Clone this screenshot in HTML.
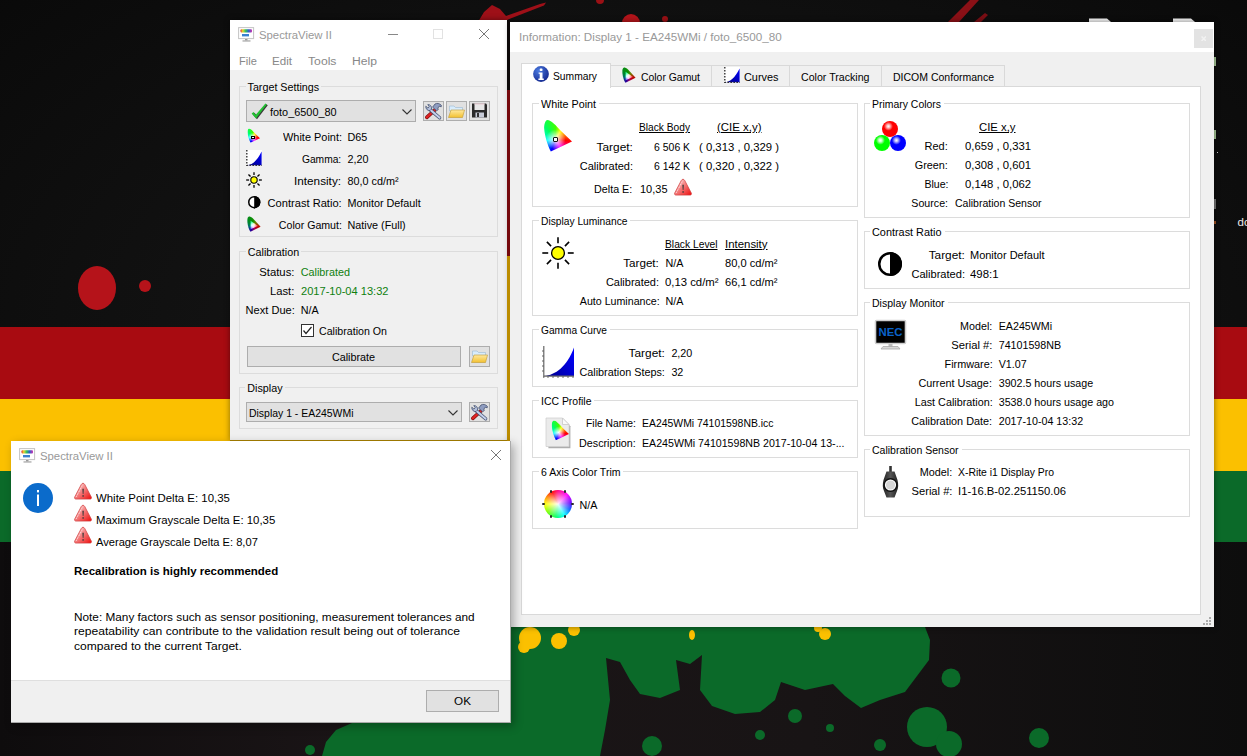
<!DOCTYPE html>
<html><head><meta charset="utf-8"><style>
html,body{margin:0;padding:0;width:1247px;height:756px;overflow:hidden;background:#0e0e0e;}
body{position:relative;font-family:"Liberation Sans",sans-serif;}
.t{position:absolute;white-space:nowrap;line-height:1;font-family:"Liberation Sans",sans-serif;}
</style></head><body>
<svg style="position:absolute;left:0;top:0" width="1247" height="756"><defs><radialGradient id="rg" cx="0.5" cy="0.45" r="0.7"><stop offset="0" stop-color="#1a1a1a"/><stop offset="1" stop-color="#090909"/></radialGradient><linearGradient id="lg" x1="0" x2="1"><stop offset="0" stop-color="#0e0c0d"/><stop offset="0.3" stop-color="#1b1517"/><stop offset="0.65" stop-color="#181415"/><stop offset="1" stop-color="#0d0d0d"/></linearGradient></defs><rect width="1247" height="756" fill="url(#rg)"/><rect x="0" y="327" width="1247" height="72" fill="#a80b11"/><rect x="0" y="399" width="1247" height="72" fill="#fbc000"/><rect x="0" y="542" width="1247" height="214" fill="url(#lg)"/><rect x="0" y="471" width="1247" height="71" fill="#0b6a29"/><ellipse cx="97" cy="288" rx="19" ry="22" fill="#b5131a"/><circle cx="145" cy="286" r="6" fill="#b5131a"/><path d="M478 22 L484 12 L492 5 L500 9 L506 16 L540 4 L546 2.5 L544 5.5 L508 19.5 L506 22Z" fill="#9e1018"/><ellipse cx="631" cy="23" rx="9" ry="9" fill="#b3141a"/><circle cx="665" cy="19" r="3" fill="#9a1015"/><circle cx="600" cy="0" r="4" fill="#9a1015"/><path d="M948 22 L970 0 L979 0 L959 22Z" fill="#8a1016"/><path d="M974 22 L985 13 L988 15 L981 22Z" fill="#7a0e14"/><path d="M322 756 L326 742 L336 730 L352 723 L511 723 L511 627 L925 627 L930 640 L929 660 L905 692 L880 700 L861 708 L845 696 L833 684 L805 690 L781 682 L775 700 L760 712 L735 714 L712 706 L700 690 L702 655 L690 664 L676 660 L680 690 L660 698 L640 694 L630 680 L620 662 L606 658 L610 700 L605 730 L600 756 Z" fill="#0b6a29"/><circle cx="310" cy="750" r="5" fill="#0b6a29"/><circle cx="951" cy="678" r="9.5" fill="#0b6a29"/><circle cx="927" cy="727" r="20" fill="#0b6a29"/><circle cx="949" cy="744" r="13" fill="#0b6a29"/><circle cx="1039" cy="738" r="10" fill="#0b6a29"/><circle cx="652" cy="746" r="10" fill="#0b6a29"/><circle cx="795" cy="716" r="7" fill="#0b6a29"/><circle cx="760" cy="735" r="5" fill="#0b6a29"/><circle cx="830" cy="728" r="4" fill="#0b6a29"/><circle cx="880" cy="745" r="6" fill="#0b6a29"/><circle cx="530" cy="638" r="11" fill="#fbc000"/><circle cx="524" cy="647" r="6" fill="#fbc000"/><circle cx="559" cy="641" r="8" fill="#fbc000"/><circle cx="574" cy="630" r="6" fill="#fbc000"/><ellipse cx="692" cy="635" rx="3" ry="5" fill="#fbc000"/><circle cx="825" cy="634" r="6" fill="#fbc000"/><circle cx="818" cy="628" r="4" fill="#fbc000"/></svg>
<svg style="position:absolute;left:1085px;top:18px;" width="120" height="5" viewBox="0 0 120 5"><path d="M4 0.5 H22 L26 4 H4Z" fill="#f2f2f2"/><path d="M88 0.5 H106 L110 4 H88Z" fill="#f2f2f2"/></svg>
<div class="t" style="left:1237.50px;top:217.27px;font-size:11.500px;color:#e8e8e8;">do</div>
<div style="position:absolute;left:1214px;top:57px;width:2px;height:9px;background:#a8c898;"></div>
<div style="position:absolute;left:1214px;top:130px;width:2px;height:9px;background:#a8c898;"></div>
<div style="position:absolute;left:1216.5px;top:151.5px;width:1.5px;height:1.5px;background:#ccc;"></div>
<div style="position:absolute;left:1214px;top:199px;width:2px;height:10px;background:#777;"></div>
<div style="position:absolute;left:1214px;top:221px;width:1.5px;height:3px;background:#a05020;"></div>
<div style="position:absolute;left:230px;top:20px;width:277px;height:420px;background:#f0f0f0;box-shadow:0 0 6px rgba(0,0,0,0.45);"></div>
<div style="position:absolute;left:230px;top:20px;width:277px;height:50px;background:#fff;"></div>
<svg style="position:absolute;left:238px;top:27px;overflow:visible" width="16" height="15" viewBox="0 0 16 15"><defs><linearGradient id="rb1"><stop offset="0" stop-color="#e83030"/><stop offset=".2" stop-color="#e8d830"/><stop offset=".45" stop-color="#30c060"/><stop offset=".7" stop-color="#3060c8"/><stop offset="1" stop-color="#d030b0"/></linearGradient></defs><rect x="0.6" y="0.6" width="15" height="11" fill="#fff" stroke="#c4c4c4" stroke-width="1"/><rect x="2.5" y="2.2" width="11.5" height="3.2" rx="1" fill="url(#rb1)"/><rect x="4" y="7" width="7" height="2.4" fill="#3a80d0"/><rect x="7" y="12" width="2.5" height="1.5" fill="#999"/><rect x="4.5" y="13.3" width="8" height="1.3" fill="#aaa"/></svg>
<div class="t" style="left:259.00px;top:29.00px;font-size:11.700px;color:#999;transform:scaleX(0.9705);transform-origin:left 0;">SpectraView II</div>
<div style="position:absolute;left:388px;top:34px;width:10px;height:1px;background:#888;"></div>
<div style="position:absolute;left:433px;top:29px;width:10px;height:10px;border:1px solid #e2e2e2;box-sizing:border-box;"></div>
<svg style="position:absolute;left:479px;top:29px;" width="10" height="10" viewBox="0 0 10 10"><path d="M0 0L10 10M10 0L0 10" stroke="#777" stroke-width="1"/></svg>
<div class="t" style="left:238.50px;top:54.61px;font-size:11.700px;color:#888;transform:scaleX(0.9442);transform-origin:left 0;">File</div>
<div class="t" style="left:272.20px;top:54.61px;font-size:11.700px;color:#888;transform:scaleX(0.9920);transform-origin:left 0;">Edit</div>
<div class="t" style="left:308.00px;top:54.61px;font-size:11.700px;color:#888;transform:scaleX(1.0434);transform-origin:left 0;">Tools</div>
<div class="t" style="left:352.20px;top:54.61px;font-size:11.700px;color:#888;transform:scaleX(1.0389);transform-origin:left 0;">Help</div>
<div style="position:absolute;left:239px;top:86px;width:259px;height:151px;border:1px solid #dcdcdc;box-sizing:border-box;"></div>
<div style="position:absolute;left:245.5px;top:82px;width:75.7066375px;height:8px;background:#f0f0f0;"></div>
<div class="t" style="left:247.50px;top:82.01px;font-size:10.750px;color:#000;">Target Settings</div>
<div style="position:absolute;left:246px;top:100px;width:170px;height:22px;background:#e1e1e1;border:1px solid #adadad;box-sizing:border-box;"></div>
<svg style="position:absolute;left:251px;top:103px;" width="17" height="17" viewBox="0 0 17 17"><path d="M0.6 10.6 L2.6 9 L4.6 11.9 L14.4 0.5 L15.8 1.5 L5 15.6 Z" fill="#3a3a3a" transform="translate(1,0.7)"/><path d="M0.6 10.6 L2.6 9 L4.6 11.9 L14.4 0.5 L15.8 1.5 L5 15.6 Z" fill="#22c032"/></svg>
<div class="t" style="left:270.00px;top:106.70px;font-size:10.900px;color:#000;">foto_6500_80</div>
<svg style="position:absolute;left:402px;top:109px;" width="10" height="6" viewBox="0 0 10 6"><path d="M0.5 0.5 L5 5 L9.5 0.5" fill="none" stroke="#333" stroke-width="1.1"/></svg>
<div style="position:absolute;left:423px;top:101px;width:21px;height:20px;background:#e1e1e1;border:1px solid #adadad;box-sizing:border-box;"></div>
<div style="position:absolute;left:446px;top:101px;width:21px;height:20px;background:#e1e1e1;border:1px solid #adadad;box-sizing:border-box;"></div>
<div style="position:absolute;left:469px;top:101px;width:21px;height:20px;background:#e1e1e1;border:1px solid #adadad;box-sizing:border-box;"></div>
<div class="t" style="right:905.50px;top:132.01px;font-size:10.750px;color:#000;transform:scaleX(1.0163);transform-origin:right 0;">White Point:</div>
<div class="t" style="left:347.50px;top:132.00px;font-size:10.800px;color:#000;">D65</div>
<div class="t" style="right:905.50px;top:154.01px;font-size:10.750px;color:#000;transform:scaleX(0.9535);transform-origin:right 0;">Gamma:</div>
<div class="t" style="left:347.50px;top:154.00px;font-size:10.800px;color:#000;">2,20</div>
<div class="t" style="right:905.50px;top:176.01px;font-size:10.750px;color:#000;transform:scaleX(1.0925);transform-origin:right 0;">Intensity:</div>
<div class="t" style="left:347.50px;top:176.00px;font-size:10.800px;color:#000;">80,0 cd/m²</div>
<div class="t" style="right:905.50px;top:198.01px;font-size:10.750px;color:#000;transform:scaleX(1.0349);transform-origin:right 0;">Contrast Ratio:</div>
<div class="t" style="left:347.50px;top:198.00px;font-size:10.800px;color:#000;">Monitor Default</div>
<div class="t" style="right:905.50px;top:220.01px;font-size:10.750px;color:#000;transform:scaleX(0.9871);transform-origin:right 0;">Color Gamut:</div>
<div class="t" style="left:347.50px;top:220.00px;font-size:10.800px;color:#000;">Native (Full)</div>
<div style="position:absolute;left:239px;top:251px;width:259px;height:123px;border:1px solid #dcdcdc;box-sizing:border-box;"></div>
<div style="position:absolute;left:245.8px;top:247px;width:55.6713125px;height:8px;background:#f0f0f0;"></div>
<div class="t" style="left:247.80px;top:246.81px;font-size:10.750px;color:#000;">Calibration</div>
<div class="t" style="right:952.50px;top:266.71px;font-size:10.750px;color:#000;transform:scaleX(1.0549);transform-origin:right 0;">Status:</div>
<div class="t" style="left:300.70px;top:266.71px;font-size:10.800px;color:#0f800f;">Calibrated</div>
<div class="t" style="right:952.50px;top:285.60px;font-size:10.750px;color:#000;transform:scaleX(1.0470);transform-origin:right 0;">Last:</div>
<div class="t" style="left:300.70px;top:285.60px;font-size:10.750px;color:#0f800f;transform:scaleX(1.0309);transform-origin:left 0;">2017-10-04 13:32</div>
<div class="t" style="right:952.50px;top:305.01px;font-size:10.750px;color:#000;transform:scaleX(1.0293);transform-origin:right 0;">Next Due:</div>
<div class="t" style="left:300.70px;top:305.01px;font-size:10.750px;color:#000;">N/A</div>
<div style="position:absolute;left:301px;top:324px;width:13px;height:13px;border:1px solid #333;box-sizing:border-box;background:#fff;"></div>
<svg style="position:absolute;left:301px;top:324px;" width="13" height="13" viewBox="0 0 13 13"><path d="M2.5 6.5 L5 9.5 L10.5 3" fill="none" stroke="#222" stroke-width="1.2"/></svg>
<div class="t" style="left:318.60px;top:325.60px;font-size:10.750px;color:#000;transform:scaleX(0.9896);transform-origin:left 0;">Calibration On</div>
<div style="position:absolute;left:247px;top:346px;width:214px;height:21px;background:#e1e1e1;border:1px solid #adadad;box-sizing:border-box;"></div>
<div class="t" style="left:331.89px;top:352.00px;font-size:10.800px;color:#000;">Calibrate</div>
<div style="position:absolute;left:469px;top:346px;width:21px;height:21px;background:#e1e1e1;border:1px solid #adadad;box-sizing:border-box;"></div>
<div style="position:absolute;left:239px;top:387px;width:259px;height:42px;border:1px solid #dcdcdc;box-sizing:border-box;"></div>
<div style="position:absolute;left:245.3px;top:383px;width:39.755578125px;height:8px;background:#f0f0f0;"></div>
<div class="t" style="left:247.30px;top:383.40px;font-size:10.750px;color:#000;">Display</div>
<div style="position:absolute;left:246px;top:402px;width:216px;height:20px;background:#e1e1e1;border:1px solid #adadad;box-sizing:border-box;"></div>
<div class="t" style="left:249.00px;top:408.31px;font-size:10.750px;color:#000;transform:scaleX(0.9718);transform-origin:left 0;">Display 1 - EA245WMi</div>
<svg style="position:absolute;left:448px;top:410px;" width="10" height="6" viewBox="0 0 10 6"><path d="M0.5 0.5 L5 5 L9.5 0.5" fill="none" stroke="#333" stroke-width="1.1"/></svg>
<div style="position:absolute;left:469px;top:402px;width:21px;height:20px;background:#e1e1e1;border:1px solid #adadad;box-sizing:border-box;"></div>
<div style="position:absolute;left:510px;top:22px;width:704px;height:605px;background:#f0f0f0;box-shadow:0 0 6px rgba(0,0,0,0.45);"></div>
<div style="position:absolute;left:510px;top:22px;width:704px;height:30px;background:#fff;"></div>
<div class="t" style="left:518.50px;top:31.00px;font-size:11.700px;color:#999;transform:scaleX(0.9985);transform-origin:left 0;">Information: Display 1 - EA245WMi / foto_6500_80</div>
<div style="position:absolute;left:1194px;top:29px;width:19px;height:19px;background:#e3e3e3;"></div>
<svg style="position:absolute;left:1200.8px;top:35.8px;" width="5.5" height="5.5" viewBox="0 0 5.5 5.5"><path d="M0.5 0.5L5 5M5 0.5L0.5 5" stroke="#f2f2f2" stroke-width="1.5"/></svg>
<div style="position:absolute;left:610px;top:65px;width:102px;height:22px;background:#f0f0f0;border:1px solid #d9d9d9;box-sizing:border-box;"></div>
<div style="position:absolute;left:711px;top:65px;width:79px;height:22px;background:#f0f0f0;border:1px solid #d9d9d9;box-sizing:border-box;"></div>
<div style="position:absolute;left:789px;top:65px;width:93px;height:22px;background:#f0f0f0;border:1px solid #d9d9d9;box-sizing:border-box;"></div>
<div style="position:absolute;left:881px;top:65px;width:124px;height:22px;background:#f0f0f0;border:1px solid #d9d9d9;box-sizing:border-box;"></div>
<div style="position:absolute;left:521px;top:86px;width:680px;height:529px;background:#fff;border:1px solid #d9d9d9;box-sizing:border-box;"></div>
<div style="position:absolute;left:521px;top:63px;width:90px;height:25px;background:#fff;border:1px solid #d9d9d9;border-bottom:none;box-sizing:border-box;"></div>
<div class="t" style="left:552.70px;top:71.01px;font-size:10.750px;color:#000;transform:scaleX(0.9567);transform-origin:left 0;">Summary</div>
<div class="t" style="left:640.70px;top:72.01px;font-size:10.750px;color:#000;transform:scaleX(0.9682);transform-origin:left 0;">Color Gamut</div>
<div class="t" style="left:743.50px;top:72.01px;font-size:10.750px;color:#000;transform:scaleX(1.0132);transform-origin:left 0;">Curves</div>
<div class="t" style="left:801.40px;top:72.01px;font-size:10.750px;color:#000;transform:scaleX(0.9884);transform-origin:left 0;">Color Tracking</div>
<div class="t" style="left:893.40px;top:72.01px;font-size:10.750px;color:#000;transform:scaleX(0.9773);transform-origin:left 0;">DICOM Conformance</div>
<div style="position:absolute;left:532px;top:103px;width:326px;height:104px;border:1px solid #dcdcdc;box-sizing:border-box;"></div>
<div style="position:absolute;left:538.8px;top:99px;width:60.0px;height:8px;background:#fff;"></div>
<div class="t" style="left:540.80px;top:98.51px;font-size:10.750px;color:#000;transform:scaleX(1.0006);transform-origin:left 0;">White Point</div>
<div class="t" style="left:638.70px;top:122.01px;font-size:10.750px;color:#000;transform:scaleX(0.9484);transform-origin:left 0;text-decoration:underline;">Black Body</div>
<div class="t" style="left:716.70px;top:122.01px;font-size:10.750px;color:#000;transform:scaleX(1.0645);transform-origin:left 0;text-decoration:underline;">(CIE x,y)</div>
<div class="t" style="right:614.50px;top:141.90px;font-size:10.750px;color:#000;transform:scaleX(1.1045);transform-origin:right 0;">Target:</div>
<div class="t" style="right:557.00px;top:141.90px;font-size:10.750px;color:#000;transform:scaleX(0.9714);transform-origin:right 0;">6 506 K</div>
<div class="t" style="left:698.70px;top:141.90px;font-size:10.750px;color:#000;transform:scaleX(1.0541);transform-origin:left 0;">( 0,313 , 0,329 )</div>
<div class="t" style="right:614.50px;top:161.01px;font-size:10.750px;color:#000;transform:scaleX(1.0233);transform-origin:right 0;">Calibrated:</div>
<div class="t" style="right:557.00px;top:161.01px;font-size:10.750px;color:#000;transform:scaleX(0.9714);transform-origin:right 0;">6 142 K</div>
<div class="t" style="left:698.70px;top:161.01px;font-size:10.750px;color:#000;transform:scaleX(1.0541);transform-origin:left 0;">( 0,320 , 0,322 )</div>
<div class="t" style="right:614.50px;top:183.60px;font-size:10.750px;color:#000;transform:scaleX(0.9990);transform-origin:right 0;">Delta E:</div>
<div class="t" style="left:639.50px;top:183.60px;font-size:10.750px;color:#000;transform:scaleX(1.0223);transform-origin:left 0;">10,35</div>
<div style="position:absolute;left:532px;top:220px;width:326px;height:96px;border:1px solid #dcdcdc;box-sizing:border-box;"></div>
<div style="position:absolute;left:538.8px;top:216px;width:91.5px;height:8px;background:#fff;"></div>
<div class="t" style="left:540.80px;top:215.60px;font-size:10.750px;color:#000;transform:scaleX(0.9524);transform-origin:left 0;">Display Luminance</div>
<div class="t" style="left:665.40px;top:238.81px;font-size:10.750px;color:#000;transform:scaleX(0.9550);transform-origin:left 0;text-decoration:underline;">Black Level</div>
<div class="t" style="left:724.90px;top:238.81px;font-size:10.750px;color:#000;transform:scaleX(1.0616);transform-origin:left 0;text-decoration:underline;">Intensity</div>
<div class="t" style="right:587.80px;top:257.90px;font-size:10.750px;color:#000;transform:scaleX(1.0863);transform-origin:right 0;">Target:</div>
<div class="t" style="left:665.40px;top:257.90px;font-size:10.750px;color:#000;">N/A</div>
<div class="t" style="left:724.90px;top:257.90px;font-size:10.750px;color:#000;transform:scaleX(1.0338);transform-origin:left 0;">80,0 cd/m²</div>
<div class="t" style="right:587.80px;top:277.01px;font-size:10.750px;color:#000;transform:scaleX(1.0214);transform-origin:right 0;">Calibrated:</div>
<div class="t" style="left:665.40px;top:277.01px;font-size:10.750px;color:#000;transform:scaleX(1.0535);transform-origin:left 0;">0,13 cd/m²</div>
<div class="t" style="left:724.90px;top:277.01px;font-size:10.750px;color:#000;transform:scaleX(1.0338);transform-origin:left 0;">66,1 cd/m²</div>
<div class="t" style="right:587.80px;top:296.01px;font-size:10.750px;color:#000;transform:scaleX(0.9904);transform-origin:right 0;">Auto Luminance:</div>
<div class="t" style="left:665.40px;top:296.01px;font-size:10.750px;color:#000;">N/A</div>
<div style="position:absolute;left:532px;top:329px;width:326px;height:58px;border:1px solid #dcdcdc;box-sizing:border-box;"></div>
<div style="position:absolute;left:538.8px;top:325px;width:71.0px;height:8px;background:#fff;"></div>
<div class="t" style="left:540.80px;top:325.10px;font-size:10.750px;color:#000;transform:scaleX(0.9443);transform-origin:left 0;">Gamma Curve</div>
<div class="t" style="right:582.40px;top:348.31px;font-size:10.750px;color:#000;transform:scaleX(1.1045);transform-origin:right 0;">Target:</div>
<div class="t" style="left:671.40px;top:348.31px;font-size:10.750px;color:#000;">2,20</div>
<div class="t" style="right:582.40px;top:367.31px;font-size:10.750px;color:#000;transform:scaleX(1.0065);transform-origin:right 0;">Calibration Steps:</div>
<div class="t" style="left:671.40px;top:367.31px;font-size:10.750px;color:#000;">32</div>
<div style="position:absolute;left:532px;top:400px;width:326px;height:58px;border:1px solid #dcdcdc;box-sizing:border-box;"></div>
<div style="position:absolute;left:538.8px;top:396px;width:55.5px;height:8px;background:#fff;"></div>
<div class="t" style="left:540.80px;top:396.01px;font-size:10.750px;color:#000;transform:scaleX(0.9717);transform-origin:left 0;">ICC Profile</div>
<div class="t" style="right:611.00px;top:418.31px;font-size:10.750px;color:#000;transform:scaleX(0.9602);transform-origin:right 0;">File Name:</div>
<div class="t" style="left:642.20px;top:418.31px;font-size:10.750px;color:#000;transform:scaleX(0.9695);transform-origin:left 0;">EA245WMi 74101598NB.icc</div>
<div class="t" style="right:611.00px;top:437.81px;font-size:10.750px;color:#000;transform:scaleX(0.9990);transform-origin:right 0;">Description:</div>
<div class="t" style="left:642.20px;top:437.81px;font-size:10.750px;color:#000;transform:scaleX(0.9879);transform-origin:left 0;">EA245WMi 74101598NB 2017-10-04 13-...</div>
<div style="position:absolute;left:532px;top:471px;width:326px;height:58px;border:1px solid #dcdcdc;box-sizing:border-box;"></div>
<div style="position:absolute;left:538.8px;top:467px;width:84.5px;height:8px;background:#fff;"></div>
<div class="t" style="left:540.80px;top:467.31px;font-size:10.750px;color:#000;transform:scaleX(0.9786);transform-origin:left 0;">6 Axis Color Trim</div>
<div class="t" style="left:579.50px;top:500.01px;font-size:10.750px;color:#000;">N/A</div>
<div style="position:absolute;left:864px;top:103px;width:326px;height:115px;border:1px solid #dcdcdc;box-sizing:border-box;"></div>
<div style="position:absolute;left:870.3px;top:99px;width:74.0px;height:8px;background:#fff;"></div>
<div class="t" style="left:872.30px;top:98.60px;font-size:10.750px;color:#000;transform:scaleX(0.9708);transform-origin:left 0;">Primary Colors</div>
<div class="t" style="left:979.30px;top:121.90px;font-size:10.750px;color:#000;transform:scaleX(1.0536);transform-origin:left 0;text-decoration:underline;">CIE x,y</div>
<div class="t" style="right:298.80px;top:140.71px;font-size:10.750px;color:#000;transform:scaleX(1.0217);transform-origin:right 0;">Red:</div>
<div class="t" style="left:964.50px;top:140.71px;font-size:10.750px;color:#000;transform:scaleX(1.0516);transform-origin:left 0;">0,659 , 0,331</div>
<div class="t" style="right:298.80px;top:159.51px;font-size:10.750px;color:#000;transform:scaleX(1.0072);transform-origin:right 0;">Green:</div>
<div class="t" style="left:964.50px;top:159.51px;font-size:10.750px;color:#000;transform:scaleX(1.0516);transform-origin:left 0;">0,308 , 0,601</div>
<div class="t" style="right:298.80px;top:178.60px;font-size:10.750px;color:#000;transform:scaleX(0.9836);transform-origin:right 0;">Blue:</div>
<div class="t" style="left:964.50px;top:178.60px;font-size:10.750px;color:#000;transform:scaleX(1.0516);transform-origin:left 0;">0,148 , 0,062</div>
<div class="t" style="right:298.80px;top:197.71px;font-size:10.750px;color:#000;transform:scaleX(0.9906);transform-origin:right 0;">Source:</div>
<div class="t" style="left:954.60px;top:197.71px;font-size:10.750px;color:#000;transform:scaleX(0.9781);transform-origin:left 0;">Calibration Sensor</div>
<div style="position:absolute;left:864px;top:231px;width:326px;height:58px;border:1px solid #dcdcdc;box-sizing:border-box;"></div>
<div style="position:absolute;left:870.3px;top:227px;width:74.5px;height:8px;background:#fff;"></div>
<div class="t" style="left:872.30px;top:227.01px;font-size:10.750px;color:#000;transform:scaleX(1.0115);transform-origin:left 0;">Contrast Ratio</div>
<div class="t" style="right:282.50px;top:250.01px;font-size:10.750px;color:#000;transform:scaleX(1.1015);transform-origin:right 0;">Target:</div>
<div class="t" style="left:970.10px;top:250.01px;font-size:10.750px;color:#000;transform:scaleX(1.0220);transform-origin:left 0;">Monitor Default</div>
<div class="t" style="right:282.50px;top:269.21px;font-size:10.750px;color:#000;transform:scaleX(1.0310);transform-origin:right 0;">Calibrated:</div>
<div class="t" style="left:970.10px;top:269.21px;font-size:10.750px;color:#000;transform:scaleX(1.0594);transform-origin:left 0;">498:1</div>
<div style="position:absolute;left:864px;top:302px;width:326px;height:134px;border:1px solid #dcdcdc;box-sizing:border-box;"></div>
<div style="position:absolute;left:870.3px;top:298px;width:77.5px;height:8px;background:#fff;"></div>
<div class="t" style="left:872.30px;top:298.01px;font-size:10.750px;color:#000;transform:scaleX(0.9787);transform-origin:left 0;">Display Monitor</div>
<div class="t" style="right:254.70px;top:321.01px;font-size:10.750px;color:#000;transform:scaleX(0.9980);transform-origin:right 0;">Model:</div>
<div class="t" style="left:998.70px;top:321.00px;font-size:10.700px;color:#000;">EA245WMi</div>
<div class="t" style="right:254.70px;top:340.10px;font-size:10.750px;color:#000;transform:scaleX(1.0447);transform-origin:right 0;">Serial #:</div>
<div class="t" style="left:998.70px;top:340.11px;font-size:10.700px;color:#000;">74101598NB</div>
<div class="t" style="right:254.70px;top:359.21px;font-size:10.750px;color:#000;transform:scaleX(1.0089);transform-origin:right 0;">Firmware:</div>
<div class="t" style="left:998.70px;top:359.22px;font-size:10.700px;color:#000;">V1.07</div>
<div class="t" style="right:254.70px;top:378.01px;font-size:10.750px;color:#000;transform:scaleX(1.0083);transform-origin:right 0;">Current Usage:</div>
<div class="t" style="left:998.70px;top:378.00px;font-size:10.700px;color:#000;">3902.5 hours usage</div>
<div class="t" style="right:254.70px;top:397.10px;font-size:10.750px;color:#000;transform:scaleX(1.0041);transform-origin:right 0;">Last Calibration:</div>
<div class="t" style="left:998.70px;top:397.11px;font-size:10.700px;color:#000;">3538.0 hours usage ago</div>
<div class="t" style="right:254.70px;top:415.90px;font-size:10.750px;color:#000;transform:scaleX(1.0091);transform-origin:right 0;">Calibration Date:</div>
<div class="t" style="left:998.70px;top:415.91px;font-size:10.700px;color:#000;">2017-10-04 13:32</div>
<div style="position:absolute;left:864px;top:449px;width:326px;height:68px;border:1px solid #dcdcdc;box-sizing:border-box;"></div>
<div style="position:absolute;left:870.3px;top:445px;width:91.5px;height:8px;background:#fff;"></div>
<div class="t" style="left:872.30px;top:444.90px;font-size:10.750px;color:#000;transform:scaleX(0.9781);transform-origin:left 0;">Calibration Sensor</div>
<div class="t" style="right:294.60px;top:467.31px;font-size:10.750px;color:#000;transform:scaleX(1.0073);transform-origin:right 0;">Model:</div>
<div class="t" style="left:958.30px;top:467.31px;font-size:10.750px;color:#000;transform:scaleX(0.9680);transform-origin:left 0;">X-Rite i1 Display Pro</div>
<div class="t" style="right:294.60px;top:486.10px;font-size:10.750px;color:#000;transform:scaleX(1.0371);transform-origin:right 0;">Serial #:</div>
<div class="t" style="left:958.30px;top:486.10px;font-size:10.750px;color:#000;transform:scaleX(1.0465);transform-origin:left 0;">I1-16.B-02.251150.06</div>
<svg style="position:absolute;left:1202px;top:616px;" width="10" height="10" viewBox="0 0 10 10"><rect x="7" y="1" width="2" height="2" fill="#aaa"/><rect x="4" y="4" width="2" height="2" fill="#aaa"/><rect x="7" y="4" width="2" height="2" fill="#aaa"/><rect x="1" y="7" width="2" height="2" fill="#aaa"/><rect x="4" y="7" width="2" height="2" fill="#aaa"/><rect x="7" y="7" width="2" height="2" fill="#aaa"/></svg>
<div style="position:absolute;left:507px;top:20px;width:3px;height:70px;background:#0c0808;"></div>
<div style="position:absolute;left:507px;top:90px;width:3px;height:166px;background:#74080c;"></div>
<div style="position:absolute;left:507px;top:256px;width:3px;height:185px;background:#bb8c00;"></div>
<div style="position:absolute;left:230px;top:440px;width:277px;height:1px;background:#a88000;"></div>
<svg style="position:absolute;left:424.5px;top:102px;overflow:visible" width="18" height="18" viewBox="0 0 18 18"><path d="M1.8 15.4 L9.6 8.2" stroke="#7a0c0c" stroke-width="3.6" stroke-linecap="round"/><path d="M1.8 15.4 L9.6 8.2" stroke="#e02424" stroke-width="2.3" stroke-linecap="round"/><path d="M7.6 5.2 L10 2 C12 0.9 14.4 1.2 16.4 3.4 L16.2 4.8 L14.2 4.2 L12.8 6.2 L13.4 7.4 L11.6 8.8 Z" fill="#8e9cc0" stroke="#44506e" stroke-width="0.8"/><path d="M5 7.6 L14.6 15.8" stroke="#44506e" stroke-width="3.4" stroke-linecap="round"/><path d="M5 7.6 L14.6 15.8" stroke="#c4d0ec" stroke-width="2" stroke-linecap="round"/><path d="M0.8 4.2 C0.5 6.8 2.5 8.8 5 8.6 L6.6 7 C7 4.5 5.2 2.4 2.8 2.6 L4.2 4.6 L3 6.2 Z" fill="#b4c0dc" stroke="#44506e" stroke-width="0.8"/></svg>
<svg style="position:absolute;left:448px;top:103px;overflow:visible" width="17" height="16" viewBox="0 0 17 16"><defs><linearGradient id="fg2" x1="0" y1="0" x2="0" y2="1"><stop offset="0" stop-color="#ffe9a0"/><stop offset="1" stop-color="#f2c030"/></linearGradient></defs><path d="M1.5 3 H6 L7.5 4.5 H14.5 V8 H1.5 Z" fill="#d8ecfc" stroke="#9ab8d0" stroke-width="0.6"/><path d="M3 7 H16.5 L14.5 14.5 H0.5 Z" fill="url(#fg2)" stroke="#c09830" stroke-width="0.6"/></svg>
<svg style="position:absolute;left:471px;top:102px;overflow:visible" width="17" height="17" viewBox="0 0 17 17"><path d="M1 1.5 H15 L16 2.5 V15.5 H1 Z" fill="#2a2a2a"/><rect x="3.5" y="1.5" width="10" height="6.5" fill="#e8e8e8"/><rect x="3.5" y="1.5" width="10" height="1" fill="#e8c8d0"/><rect x="4.5" y="10.5" width="8.5" height="5" fill="#c8ccd8"/><rect x="6" y="11" width="2" height="4" fill="#333"/></svg>
<svg style="position:absolute;left:471px;top:348px;overflow:visible" width="17" height="16" viewBox="0 0 17 16"><defs><linearGradient id="fg3" x1="0" y1="0" x2="0" y2="1"><stop offset="0" stop-color="#ffe9a0"/><stop offset="1" stop-color="#f2c030"/></linearGradient></defs><path d="M1.5 3 H6 L7.5 4.5 H14.5 V8 H1.5 Z" fill="#d8ecfc" stroke="#9ab8d0" stroke-width="0.6"/><path d="M3 7 H16.5 L14.5 14.5 H0.5 Z" fill="url(#fg3)" stroke="#c09830" stroke-width="0.6"/></svg>
<svg style="position:absolute;left:470.5px;top:403px;overflow:visible" width="18" height="18" viewBox="0 0 18 18"><path d="M1.8 15.4 L9.6 8.2" stroke="#7a0c0c" stroke-width="3.6" stroke-linecap="round"/><path d="M1.8 15.4 L9.6 8.2" stroke="#e02424" stroke-width="2.3" stroke-linecap="round"/><path d="M7.6 5.2 L10 2 C12 0.9 14.4 1.2 16.4 3.4 L16.2 4.8 L14.2 4.2 L12.8 6.2 L13.4 7.4 L11.6 8.8 Z" fill="#8e9cc0" stroke="#44506e" stroke-width="0.8"/><path d="M5 7.6 L14.6 15.8" stroke="#44506e" stroke-width="3.4" stroke-linecap="round"/><path d="M5 7.6 L14.6 15.8" stroke="#c4d0ec" stroke-width="2" stroke-linecap="round"/><path d="M0.8 4.2 C0.5 6.8 2.5 8.8 5 8.6 L6.6 7 C7 4.5 5.2 2.4 2.8 2.6 L4.2 4.6 L3 6.2 Z" fill="#b4c0dc" stroke="#44506e" stroke-width="0.8"/></svg>
<div style="position:absolute;left:247px;top:128px;width:30px;height:34px;transform:scale(0.45);transform-origin:0 0;"><div style="width:30px;height:34px;clip-path:path('M4.4 1 C2 1.5 1 6 1.2 10 C1.8 17 4.5 26 7.8 32.5 L29 22.5 L18 12 C13 6.5 8 1 4.4 1 Z');background:radial-gradient(circle at 12.6px 20.3px, rgba(255,255,255,1) 0px, rgba(255,255,255,0.6) 4px, rgba(255,255,255,0) 10px), conic-gradient(from 0deg at 12.6px 20.3px, #40ff00 0deg, #ffff00 30deg, #ff0000 97deg, #ff00ff 150deg, #0000ff 200deg, #00ffff 262deg, #00ff60 320deg, #40ff00 360deg);"></div></div>
<div style="position:absolute;left:251.2px;top:135.6px;width:3.4000000000000057px;height:3.5999999999999943px;border:1.1px solid #000;box-sizing:border-box;background:#fff;"></div>
<svg style="position:absolute;left:246px;top:150px;overflow:visible" width="16" height="16" viewBox="0 0 16 16"><defs><linearGradient id="gg4" x1="0" y1="1" x2="1" y2="0"><stop offset="0" stop-color="#000080"/><stop offset="1" stop-color="#0000ff"/></linearGradient></defs><rect x="0.5" y="0" width="15.5" height="15.5" fill="#fff"/><path d="M1 15.3 C6 15 11 11 15.6 1.5 L15.6 15.3 Z" fill="url(#gg4)"/><path d="M0.8 0 V15.4 H16" fill="none" stroke="#333" stroke-width="1.4" stroke-dasharray="1.6 1.4"/></svg>
<svg style="position:absolute;left:246px;top:171.5px;overflow:visible" width="16.0" height="16.0" viewBox="0 0 32 32"><path d="M16.00 6.20 L16.00 0.30" stroke="#000" stroke-width="2.6"/><path d="M22.93 9.07 L27.10 4.90" stroke="#000" stroke-width="2.6"/><path d="M25.80 16.00 L31.70 16.00" stroke="#000" stroke-width="2.6"/><path d="M22.93 22.93 L27.10 27.10" stroke="#000" stroke-width="2.6"/><path d="M16.00 25.80 L16.00 31.70" stroke="#000" stroke-width="2.6"/><path d="M9.07 22.93 L4.90 27.10" stroke="#000" stroke-width="2.6"/><path d="M6.20 16.00 L0.30 16.00" stroke="#000" stroke-width="2.6"/><path d="M9.07 9.07 L4.90 4.90" stroke="#000" stroke-width="2.6"/><circle cx="16" cy="16" r="6.4" fill="#ffff00" stroke="#000" stroke-width="2.2"/></svg>
<svg style="position:absolute;left:247.5px;top:196px;overflow:visible" width="12.4" height="12.4" viewBox="0 0 12.4 12.4"><circle cx="6.2" cy="6.2" r="5.45" fill="#fff" stroke="#000" stroke-width="1.5"/><path d="M6.2 0 A6.2 6.2 0 0 1 6.2 12.4 Z" fill="#000"/></svg>
<div style="position:absolute;left:247px;top:216px;width:14px;height:16px;transform:scale(1.0);transform-origin:0 0;"><div style="position:absolute;left:0;top:0;width:14px;height:16px;clip-path:path('M2 0.5 C0.5 1 0.2 3 0.4 6 C0.8 10 1.5 13 3.5 15.8 L13.6 10.8 L6 2.5 C4.5 1 3 0.5 2 0.5 Z');background:conic-gradient(from 0deg at 6px 10px, #109000 0deg, #708000 40deg, #c00000 100deg, #a00060 160deg, #2000a0 205deg, #007070 265deg, #008a20 320deg, #109000 360deg);"></div><div style="position:absolute;left:0;top:0;width:14px;height:16px;clip-path:polygon(3.6px 4.8px, 3.6px 13.2px, 11px 10px);background:radial-gradient(circle at 6px 9.5px, #fff 0px, rgba(255,255,255,0.8) 1.5px, rgba(255,255,255,0) 4px), conic-gradient(from 0deg at 6px 9.5px, #40ff80 0deg, #ffd060 40deg, #ff4060 100deg, #ff60ff 170deg, #6060ff 215deg, #00ffff 265deg, #40ff80 360deg);"></div></div>
<svg style="position:absolute;left:533px;top:66px;overflow:visible" width="16" height="16" viewBox="0 0 16 16"><defs><radialGradient id="ig5" cx="0.35" cy="0.3" r="0.8"><stop offset="0" stop-color="#4a7ae0"/><stop offset="1" stop-color="#10238a"/></radialGradient></defs><circle cx="8" cy="8" r="7.9" fill="url(#ig5)"/><rect x="6.7" y="2.6" width="2.8" height="2.4" rx="0.8" fill="#fff"/><path d="M5.6 6.4 H9.5 V12.6 H10.8 V14 H5.4 V12.6 H6.7 V7.7 H5.6 Z" fill="#fff"/></svg>
<div style="position:absolute;left:622px;top:67px;width:14px;height:16px;transform:scale(1.0);transform-origin:0 0;"><div style="position:absolute;left:0;top:0;width:14px;height:16px;clip-path:path('M2 0.5 C0.5 1 0.2 3 0.4 6 C0.8 10 1.5 13 3.5 15.8 L13.6 10.8 L6 2.5 C4.5 1 3 0.5 2 0.5 Z');background:conic-gradient(from 0deg at 6px 10px, #109000 0deg, #708000 40deg, #c00000 100deg, #a00060 160deg, #2000a0 205deg, #007070 265deg, #008a20 320deg, #109000 360deg);"></div><div style="position:absolute;left:0;top:0;width:14px;height:16px;clip-path:polygon(3.6px 4.8px, 3.6px 13.2px, 11px 10px);background:radial-gradient(circle at 6px 9.5px, #fff 0px, rgba(255,255,255,0.8) 1.5px, rgba(255,255,255,0) 4px), conic-gradient(from 0deg at 6px 9.5px, #40ff80 0deg, #ffd060 40deg, #ff4060 100deg, #ff60ff 170deg, #6060ff 215deg, #00ffff 265deg, #40ff80 360deg);"></div></div>
<svg style="position:absolute;left:724px;top:67px;overflow:visible" width="16" height="16" viewBox="0 0 16 16"><defs><linearGradient id="gg6" x1="0" y1="1" x2="1" y2="0"><stop offset="0" stop-color="#000080"/><stop offset="1" stop-color="#0000ff"/></linearGradient></defs><rect x="0.5" y="0" width="15.5" height="15.5" fill="#fff"/><path d="M1 15.3 C6 15 11 11 15.6 1.5 L15.6 15.3 Z" fill="url(#gg6)"/><path d="M0.8 0 V15.4 H16" fill="none" stroke="#333" stroke-width="1.4" stroke-dasharray="1.6 1.4"/></svg>
<div style="position:absolute;left:543px;top:119px;width:30px;height:34px;transform:scale(1.0);transform-origin:0 0;"><div style="width:30px;height:34px;clip-path:path('M4.4 1 C2 1.5 1 6 1.2 10 C1.8 17 4.5 26 7.8 32.5 L29 22.5 L18 12 C13 6.5 8 1 4.4 1 Z');background:radial-gradient(circle at 12.6px 20.3px, rgba(255,255,255,1) 0px, rgba(255,255,255,0.6) 4px, rgba(255,255,255,0) 10px), conic-gradient(from 0deg at 12.6px 20.3px, #40ff00 0deg, #ffff00 30deg, #ff0000 97deg, #ff00ff 150deg, #0000ff 200deg, #00ffff 262deg, #00ff60 320deg, #40ff00 360deg);"></div><div style="position:absolute;left:10.2px;top:17.6px;width:5.2px;height:5.2px;box-sizing:border-box;border:1.5px solid #111;border-radius:1px;background:#fff;"></div></div>
<svg style="position:absolute;left:673.5px;top:178px;overflow:visible" width="18.0" height="18.0" viewBox="0 0 18 18"><defs><linearGradient id="wg7" x1="0" y1="0" x2="1" y2="1"><stop offset="0" stop-color="#ffe4e4"/><stop offset="0.5" stop-color="#f47878"/><stop offset="1" stop-color="#ee0a0a"/></linearGradient></defs><path d="M9 1.2 C9.8 1.2 10.3 1.8 10.8 2.6 L17.3 15 C17.8 16.1 17.3 17.1 16 17.1 H2 C0.7 17.1 0.2 16.1 0.7 15 L7.2 2.6 C7.7 1.8 8.2 1.2 9 1.2Z" fill="url(#wg7)" stroke="#d04040" stroke-width="0.7"/><path d="M2.2 14.8 L8.4 3.4" stroke="#fff" stroke-width="0.9" stroke-dasharray="1 0.8" opacity="0.9"/><path d="M8.35 6.8 H9.85 L9.45 12 H8.75 Z" fill="#3a3a3a"/><rect x="8.4" y="13.2" width="1.4" height="1.5" fill="#3a3a3a"/></svg>
<svg style="position:absolute;left:542px;top:236.5px;overflow:visible" width="32.0" height="32.0" viewBox="0 0 32 32"><path d="M16.00 6.20 L16.00 0.30" stroke="#000" stroke-width="1.6"/><path d="M22.93 9.07 L27.10 4.90" stroke="#000" stroke-width="1.6"/><path d="M25.80 16.00 L31.70 16.00" stroke="#000" stroke-width="1.6"/><path d="M22.93 22.93 L27.10 27.10" stroke="#000" stroke-width="1.6"/><path d="M16.00 25.80 L16.00 31.70" stroke="#000" stroke-width="1.6"/><path d="M9.07 22.93 L4.90 27.10" stroke="#000" stroke-width="1.6"/><path d="M6.20 16.00 L0.30 16.00" stroke="#000" stroke-width="1.6"/><path d="M9.07 9.07 L4.90 4.90" stroke="#000" stroke-width="1.6"/><circle cx="16" cy="16" r="6.4" fill="#ffff00" stroke="#000" stroke-width="1.3"/></svg>
<svg style="position:absolute;left:542.5px;top:345px;overflow:visible" width="32" height="33" viewBox="0 0 32 33"><defs><linearGradient id="gg8" x1="0" y1="1" x2="1" y2="0.3"><stop offset="0" stop-color="#00008a"/><stop offset="1" stop-color="#0000f5"/></linearGradient></defs><path d="M1.5 31 C12 30 24 22 31 2.5 L31 31 Z" fill="url(#gg8)"/><path d="M0.8 1 V31.2 H31" fill="none" stroke="#666" stroke-width="1.2"/><path d="M-1 6 h2" stroke="#666" stroke-width="1"/><path d="M-1 11 h2" stroke="#666" stroke-width="1"/><path d="M-1 16 h2" stroke="#666" stroke-width="1"/><path d="M-1 21 h2" stroke="#666" stroke-width="1"/><path d="M-1 26 h2" stroke="#666" stroke-width="1"/><path d="M0.8 31 v2" stroke="#666" stroke-width="1"/><path d="M5 31 v2" stroke="#666" stroke-width="1"/><path d="M10 31 v2" stroke="#666" stroke-width="1"/><path d="M15 31 v2" stroke="#666" stroke-width="1"/><path d="M20 31 v2" stroke="#666" stroke-width="1"/><path d="M25 31 v2" stroke="#666" stroke-width="1"/><path d="M30 31 v2" stroke="#666" stroke-width="1"/></svg>
<svg style="position:absolute;left:545px;top:417px;overflow:visible" width="27" height="33" viewBox="0 0 27 33"><path d="M2 2 H18 L24 8 V30 H2 Z" fill="#777" opacity="0.6" transform="translate(1.4,1.2)"/><path d="M1 1 H17.5 L24 7.5 V29.5 H1 Z" fill="#ebebeb" stroke="#d0d0d0" stroke-width="0.8"/><path d="M17.5 1 V7.5 H24 Z" fill="#fafafa" stroke="#c8c8c8" stroke-width="0.8"/></svg><div style="position:absolute;left:550.6px;top:420.4px;width:30px;height:34px;transform:scale(0.62);transform-origin:0 0;"><div style="width:30px;height:34px;clip-path:path('M4.4 1 C2 1.5 1 6 1.2 10 C1.8 17 4.5 26 7.8 32.5 L29 22.5 L18 12 C13 6.5 8 1 4.4 1 Z');background:radial-gradient(circle at 12.6px 20.3px, rgba(255,255,255,1) 0px, rgba(255,255,255,0.6) 4px, rgba(255,255,255,0) 10px), conic-gradient(from 0deg at 12.6px 20.3px, #40ff00 0deg, #ffff00 30deg, #ff0000 97deg, #ff00ff 150deg, #0000ff 200deg, #00ffff 262deg, #00ff60 320deg, #40ff00 360deg);"></div></div>
<div style="position:absolute;left:543px;top:489px;width:30px;height:30px;"><div style="position:absolute;left:1px;top:1px;width:28px;height:28px;border-radius:50%;background:radial-gradient(circle, rgba(255,255,255,0.95) 0, rgba(255,255,255,0.6) 5px, rgba(255,255,255,0) 14px), conic-gradient(#ff0080 0deg, #ff00ff 45deg, #6000ff 85deg, #0060ff 115deg, #00ffff 150deg, #00ff60 190deg, #80ff00 235deg, #ffff00 270deg, #ff8000 305deg, #ff0000 335deg, #ff0080 360deg);"></div><div style="position:absolute;left:21.15px;top:1.34px;width:2.2px;height:2.2px;border-radius:50%;background:#2a2a2a;"></div><div style="position:absolute;left:28.40px;top:13.90px;width:2.2px;height:2.2px;border-radius:50%;background:#2a2a2a;"></div><div style="position:absolute;left:21.15px;top:26.46px;width:2.2px;height:2.2px;border-radius:50%;background:#2a2a2a;"></div><div style="position:absolute;left:6.65px;top:26.46px;width:2.2px;height:2.2px;border-radius:50%;background:#2a2a2a;"></div><div style="position:absolute;left:-0.60px;top:13.90px;width:2.2px;height:2.2px;border-radius:50%;background:#2a2a2a;"></div><div style="position:absolute;left:6.65px;top:1.34px;width:2.2px;height:2.2px;border-radius:50%;background:#2a2a2a;"></div></div>
<div style="position:absolute;left:874px;top:121px;width:32px;height:32px;"><div style="position:absolute;left:8px;top:0px;width:16px;height:16px;border-radius:50%;background:radial-gradient(circle at 40% 33%, #fff 0, #ffc0c0 1.5px, #ff0000 4.5px, #ff0000 100%);"></div><div style="position:absolute;left:0px;top:14px;width:16px;height:16px;border-radius:50%;background:radial-gradient(circle at 40% 33%, #fff 0, #d0ffd0 1.5px, #00ff00 4.5px, #00ff00 100%);"></div><div style="position:absolute;left:16px;top:14px;width:16px;height:16px;border-radius:50%;background:radial-gradient(circle at 40% 33%, #fff 0, #c0c0ff 1.5px, #0000ff 4.5px, #0000ff 100%);"></div></div>
<svg style="position:absolute;left:878px;top:252px;overflow:visible" width="24" height="24" viewBox="0 0 24 24"><circle cx="12" cy="12" r="10.75" fill="#fff" stroke="#000" stroke-width="2.5"/><path d="M12 0 A12 12 0 0 1 12 24 Z" fill="#000"/></svg>
<svg style="position:absolute;left:874.5px;top:320px;overflow:visible" width="31" height="30" viewBox="0 0 31 30"><rect x="0.5" y="0.5" width="30" height="23" rx="1" fill="#000" stroke="#cfcfcf" stroke-width="1.6"/><text x="15.5" y="16" text-anchor="middle" font-family="Liberation Sans" font-weight="bold" font-size="10" fill="#0a62c8" textLength="24" lengthAdjust="spacingAndGlyphs">NEC</text><rect x="13.5" y="24" width="4" height="3" fill="#bbb"/><path d="M6 29 L8 26.5 H23 L25 29 Z" fill="#d8d8d8" stroke="#aaa" stroke-width="0.8"/></svg>
<svg style="position:absolute;left:882px;top:466px;overflow:visible" width="17" height="32" viewBox="0 0 17 32"><defs><linearGradient id="sg9" x1="0" x2="1"><stop offset="0" stop-color="#222"/><stop offset="0.5" stop-color="#555"/><stop offset="1" stop-color="#222"/></linearGradient></defs><rect x="7.2" y="0" width="2.6" height="6" fill="#333"/><path d="M4.5 5.5 H12.5 L15.5 14 C16.5 18 16.5 22 15 25 L12.5 31.5 H4.5 L2 25 C0.5 22 0.5 18 1.5 14 Z" fill="url(#sg9)"/><circle cx="8.5" cy="19" r="7" fill="#111"/><circle cx="8.5" cy="19" r="5.6" fill="#fff"/><circle cx="8.5" cy="19" r="4.6" fill="#d6d6d6"/></svg>
<div style="position:absolute;left:11px;top:441px;width:500px;height:282px;background:#f0f0f0;box-shadow:3px 3px 9px rgba(0,0,0,0.3);border:1px solid #aaa;border-top:none;border-left:none;box-sizing:border-box;"></div>
<div style="position:absolute;left:11px;top:441px;width:499px;height:239px;background:#fff;"></div>
<div style="position:absolute;left:11px;top:680px;width:499px;height:1px;background:#dfdfdf;"></div>
<svg style="position:absolute;left:19px;top:448px;overflow:visible" width="16" height="15" viewBox="0 0 16 15"><defs><linearGradient id="rb10"><stop offset="0" stop-color="#e83030"/><stop offset=".2" stop-color="#e8d830"/><stop offset=".45" stop-color="#30c060"/><stop offset=".7" stop-color="#3060c8"/><stop offset="1" stop-color="#d030b0"/></linearGradient></defs><rect x="0.6" y="0.6" width="15" height="11" fill="#fff" stroke="#c4c4c4" stroke-width="1"/><rect x="2.5" y="2.2" width="11.5" height="3.2" rx="1" fill="url(#rb10)"/><rect x="4" y="7" width="7" height="2.4" fill="#3a80d0"/><rect x="7" y="12" width="2.5" height="1.5" fill="#999"/><rect x="4.5" y="13.3" width="8" height="1.3" fill="#aaa"/></svg>
<div class="t" style="left:40.00px;top:450.00px;font-size:11.700px;color:#999;transform:scaleX(0.9705);transform-origin:left 0;">SpectraView II</div>
<svg style="position:absolute;left:491px;top:450px;" width="10" height="10" viewBox="0 0 10 10"><path d="M0 0L10 10M10 0L0 10" stroke="#666" stroke-width="0.9"/></svg>
<svg style="position:absolute;left:23px;top:483px;overflow:visible" width="30" height="30" viewBox="0 0 30 30"><circle cx="15" cy="15" r="15" fill="#0b6bcb"/><rect x="14" y="7" width="2" height="2.4" fill="#fff"/><rect x="14" y="11.5" width="2" height="11.5" fill="#fff"/></svg>
<svg style="position:absolute;left:74px;top:482px;overflow:visible" width="18.0" height="18.0" viewBox="0 0 18 18"><defs><linearGradient id="wg11" x1="0" y1="0" x2="1" y2="1"><stop offset="0" stop-color="#ffe4e4"/><stop offset="0.5" stop-color="#f47878"/><stop offset="1" stop-color="#ee0a0a"/></linearGradient></defs><path d="M9 1.2 C9.8 1.2 10.3 1.8 10.8 2.6 L17.3 15 C17.8 16.1 17.3 17.1 16 17.1 H2 C0.7 17.1 0.2 16.1 0.7 15 L7.2 2.6 C7.7 1.8 8.2 1.2 9 1.2Z" fill="url(#wg11)" stroke="#d04040" stroke-width="0.7"/><path d="M2.2 14.8 L8.4 3.4" stroke="#fff" stroke-width="0.9" stroke-dasharray="1 0.8" opacity="0.9"/><path d="M8.35 6.8 H9.85 L9.45 12 H8.75 Z" fill="#3a3a3a"/><rect x="8.4" y="13.2" width="1.4" height="1.5" fill="#3a3a3a"/></svg>
<svg style="position:absolute;left:74px;top:504px;overflow:visible" width="18.0" height="18.0" viewBox="0 0 18 18"><defs><linearGradient id="wg12" x1="0" y1="0" x2="1" y2="1"><stop offset="0" stop-color="#ffe4e4"/><stop offset="0.5" stop-color="#f47878"/><stop offset="1" stop-color="#ee0a0a"/></linearGradient></defs><path d="M9 1.2 C9.8 1.2 10.3 1.8 10.8 2.6 L17.3 15 C17.8 16.1 17.3 17.1 16 17.1 H2 C0.7 17.1 0.2 16.1 0.7 15 L7.2 2.6 C7.7 1.8 8.2 1.2 9 1.2Z" fill="url(#wg12)" stroke="#d04040" stroke-width="0.7"/><path d="M2.2 14.8 L8.4 3.4" stroke="#fff" stroke-width="0.9" stroke-dasharray="1 0.8" opacity="0.9"/><path d="M8.35 6.8 H9.85 L9.45 12 H8.75 Z" fill="#3a3a3a"/><rect x="8.4" y="13.2" width="1.4" height="1.5" fill="#3a3a3a"/></svg>
<svg style="position:absolute;left:74px;top:526px;overflow:visible" width="18.0" height="18.0" viewBox="0 0 18 18"><defs><linearGradient id="wg13" x1="0" y1="0" x2="1" y2="1"><stop offset="0" stop-color="#ffe4e4"/><stop offset="0.5" stop-color="#f47878"/><stop offset="1" stop-color="#ee0a0a"/></linearGradient></defs><path d="M9 1.2 C9.8 1.2 10.3 1.8 10.8 2.6 L17.3 15 C17.8 16.1 17.3 17.1 16 17.1 H2 C0.7 17.1 0.2 16.1 0.7 15 L7.2 2.6 C7.7 1.8 8.2 1.2 9 1.2Z" fill="url(#wg13)" stroke="#d04040" stroke-width="0.7"/><path d="M2.2 14.8 L8.4 3.4" stroke="#fff" stroke-width="0.9" stroke-dasharray="1 0.8" opacity="0.9"/><path d="M8.35 6.8 H9.85 L9.45 12 H8.75 Z" fill="#3a3a3a"/><rect x="8.4" y="13.2" width="1.4" height="1.5" fill="#3a3a3a"/></svg>
<div class="t" style="left:96.00px;top:492.00px;font-size:11.700px;color:#000;transform:scaleX(0.9765);transform-origin:left 0;">White Point Delta E: 10,35</div>
<div class="t" style="left:96.00px;top:514.00px;font-size:11.700px;color:#000;transform:scaleX(0.9754);transform-origin:left 0;">Maximum Grayscale Delta E: 10,35</div>
<div class="t" style="left:96.00px;top:535.50px;font-size:11.700px;color:#000;transform:scaleX(0.9520);transform-origin:left 0;">Average Grayscale Delta E: 8,07</div>
<div class="t" style="left:73.60px;top:565.00px;font-size:11.700px;color:#000;font-weight:bold;transform:scaleX(0.9829);transform-origin:left 0;">Recalibration is highly recommended</div>
<div class="t" style="left:73.60px;top:610.50px;font-size:11.700px;color:#000;transform:scaleX(1.0092);transform-origin:left 0;">Note: Many factors such as sensor positioning, measurement tolerances and</div>
<div class="t" style="left:73.60px;top:625.00px;font-size:11.700px;color:#000;transform:scaleX(1.0371);transform-origin:left 0;">repeatability can contribute to the validation result being out of tolerance</div>
<div class="t" style="left:73.60px;top:639.50px;font-size:11.700px;color:#000;transform:scaleX(1.0305);transform-origin:left 0;">compared to the current Target.</div>
<div style="position:absolute;left:426px;top:690px;width:73px;height:22px;background:#e1e1e1;border:1px solid #adadad;box-sizing:border-box;"></div>
<div class="t" style="left:454.05px;top:695.00px;font-size:11.700px;color:#000;">OK</div>
</body></html>
